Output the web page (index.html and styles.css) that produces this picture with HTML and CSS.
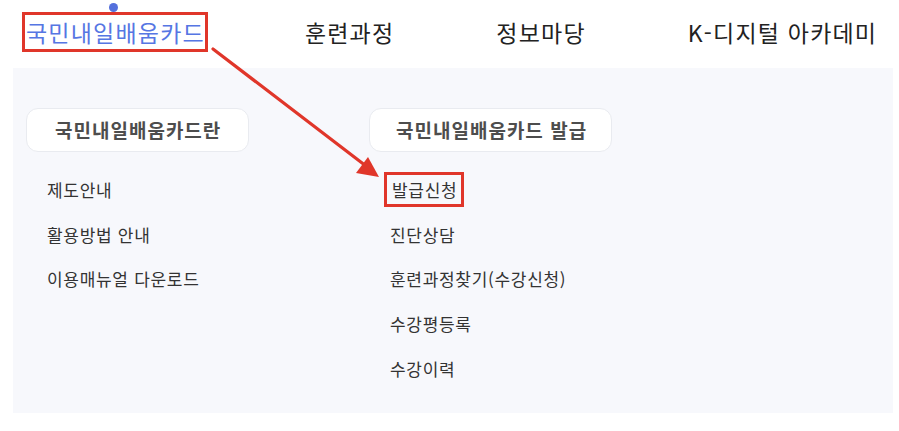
FILE: index.html
```html
<!DOCTYPE html>
<html lang="ko">
<head>
    <meta charset="UTF-8">
    <meta name="viewport" content="width=device-width, initial-scale=1.0">
    <title>국민내일배움카드 메뉴</title>
    <link rel="stylesheet" href="styles.css">
</head>
<body>

    <nav class="gnb">
        <a class="gnb-item active" href="#"><span class="mark">국민내일배움카드</span></a>
        <a class="gnb-item" href="#">훈련과정</a>
        <a class="gnb-item" href="#">정보마당</a>
        <a class="gnb-item" href="#">K-디지털 아카데미</a>
    </nav>

    <div class="submenu">
        <div class="col col-first">
            <div class="col-title">국민내일배움카드란</div>
            <ul class="links">
                <li>제도안내</li>
                <li>활용방법 안내</li>
                <li>이용매뉴얼 다운로드</li>
            </ul>
        </div>
        <div class="col">
            <div class="col-title">국민내일배움카드 발급</div>
            <ul class="links">
                <li><span class="mark-sm">발급신청</span></li>
                <li>진단상담</li>
                <li>훈련과정찾기(수강신청)</li>
                <li>수강평등록</li>
                <li>수강이력</li>
            </ul>
        </div>
    </div>

    <!-- annotation arrow -->
    <svg class="arrow" width="899" height="431" viewBox="0 0 899 431">
        <line x1="213" y1="49" x2="366" y2="166" stroke="#e0362a" stroke-width="3.2" stroke-linecap="round"/>
        <polygon points="379,177 356,173 368,157" fill="#e0362a"/>
    </svg>

</body>
</html>
```

FILE: styles.css
```css
* {
    box-sizing: border-box;
}

body {
    font-family: "Noto Sans CJK KR", "Noto Sans", sans-serif;
    background: #fff;
    color: #222;
    margin: 0;
    position: relative;
    width: 899px;
    height: 431px;
    overflow: hidden;
}

.gnb {
    display: flex;
    align-items: center;
    gap: 102px;
    height: 68px;
    padding: 0 0 4px 25px;
}

.gnb-item {
    position: relative;
    font-size: 23px;
    letter-spacing: 1.2px;
    color: #222;
    text-decoration: none;
    line-height: 1;
}

.gnb-item:first-child {
    margin-right: -2px;
}

.gnb-item.active {
    color: #5676e3;
}

.gnb-item.active::before {
    content: "";
    position: absolute;
    left: 84px;
    top: -18px;
    width: 9px;
    height: 9px;
    border-radius: 50%;
    background: #5470dc;
}

.mark {
    outline: 3px solid #e0362a;
    outline-offset: 0;
    padding: 0 0 0 1px;
}

.submenu {
    margin-left: 13px;
    width: 880px;
    height: 345px;
    background: #f7f8fc;
    display: flex;
    padding: 40px 0 0 13px;
}

.col-first {
    width: 343px;
}

.col-title {
    display: inline-block;
    height: 44px;
    line-height: 42px;
    padding: 0 24px 0 26px;
    background: #fff;
    border: 1px solid #e9ebf0;
    border-radius: 12px;
    font-size: 19px;
    font-weight: 700;
    color: #4d4d4d;
    letter-spacing: 1px;
}

.col-first .col-title {
    padding: 0 27px 0 28px;
}

.links {
    list-style: none;
    margin: 16px 0 0;
    padding: 0 0 0 21px;
}

.links li {
    height: 44.7px;
    line-height: 44px;
    font-size: 17px;
    color: #333;
    letter-spacing: 0.7px;
}

.mark-sm {
    display: inline-block;
    margin-top: 4px;
    margin-left: -6px;
    padding: 0 4px 0 5px;
    line-height: 29px;
    border: 3px solid #e0362a;
}

.arrow {
    position: absolute;
    left: 0;
    top: 0;
    pointer-events: none;
}
```
